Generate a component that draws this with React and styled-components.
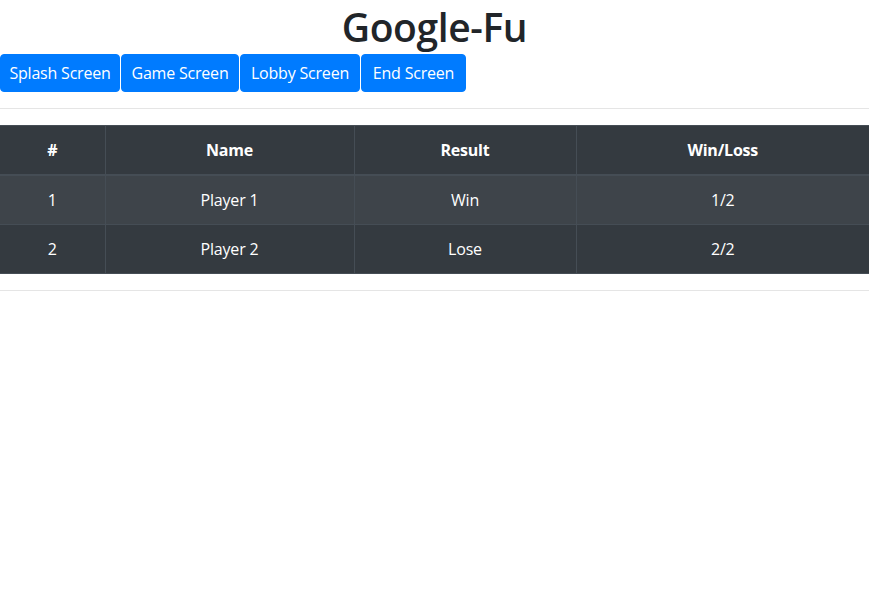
import React from 'react';
import styled, { createGlobalStyle } from 'styled-components';

const GlobalStyle = createGlobalStyle`
  body {
    margin: 0;
    font-family: 'Open Sans', 'Noto Sans', sans-serif;
    font-size: 16px;
    line-height: 1.5;
    color: #212529;
    background: #fff;
  }
  * {
    box-sizing: border-box;
  }
`;

const Title = styled.h1`
  margin: 0;
  font-size: 39px;
  font-weight: 600;
  line-height: 54px;
  text-align: center;
  letter-spacing: -0.4px;
`;

const ButtonRow = styled.div`
  display: flex;
`;

const Button = styled.button`
  font-family: inherit;
  font-size: 16px;
  line-height: 24px;
  color: #fff;
  background-color: #007bff;
  border: 1px solid #007bff;
  border-radius: 4px;
  padding: 6px 0;
  width: ${(p) => p.$w}px;
  margin-right: 1px;
  cursor: pointer;
  letter-spacing: -0.2px;
  &:hover {
    background-color: #0069d9;
  }
`;

const Rule = styled.hr`
  margin: 16px 0;
  border: 0;
  border-top: 1px solid rgba(0, 0, 0, 0.1);
`;

const Table = styled.table`
  width: 100%;
  border-collapse: collapse;
  table-layout: fixed;
  color: #fff;
  background-color: #343a40;
  text-align: center;
`;

const Th = styled.th`
  padding: 12px;
  font-weight: 700;
  border: 1px solid #454d55;
  border-bottom-width: 2px;
  width: ${(p) => p.$w}px;
  letter-spacing: -0.2px;
  &:first-child {
    border-left: 0;
  }
  &:last-child {
    border-right: 0;
  }
`;

const Row = styled.tr`
  background-color: ${(p) => (p.$striped ? '#3e444a' : 'transparent')};
`;

const Td = styled.td`
  padding: 12px;
  border: 1px solid #454d55;
  letter-spacing: -0.2px;
  &:first-child {
    border-left: 0;
  }
  &:last-child {
    border-right: 0;
  }
`;

const screens = [
  { label: 'Splash Screen', w: 120 },
  { label: 'Game Screen', w: 118 },
  { label: 'Lobby Screen', w: 120 },
  { label: 'End Screen', w: 105 },
];

const players = [
  { id: 1, name: 'Player 1', result: 'Win', record: '1/2' },
  { id: 2, name: 'Player 2', result: 'Lose', record: '2/2' },
];

const App = () => (
  <>
    <GlobalStyle />
    <Title>Google-Fu</Title>
    <ButtonRow>
      {screens.map((s) => (
        <Button key={s.label} $w={s.w}>
          {s.label}
        </Button>
      ))}
    </ButtonRow>
    <Rule />
    <Table>
      <thead>
        <tr>
          <Th $w={105}>#</Th>
          <Th $w={249}>Name</Th>
          <Th $w={222}>Result</Th>
          <Th>Win/Loss</Th>
        </tr>
      </thead>
      <tbody>
        {players.map((p, i) => (
          <Row key={p.id} $striped={i % 2 === 0}>
            <Td>{p.id}</Td>
            <Td>{p.name}</Td>
            <Td>{p.result}</Td>
            <Td>{p.record}</Td>
          </Row>
        ))}
      </tbody>
    </Table>
    <Rule />
  </>
);

export default App;
